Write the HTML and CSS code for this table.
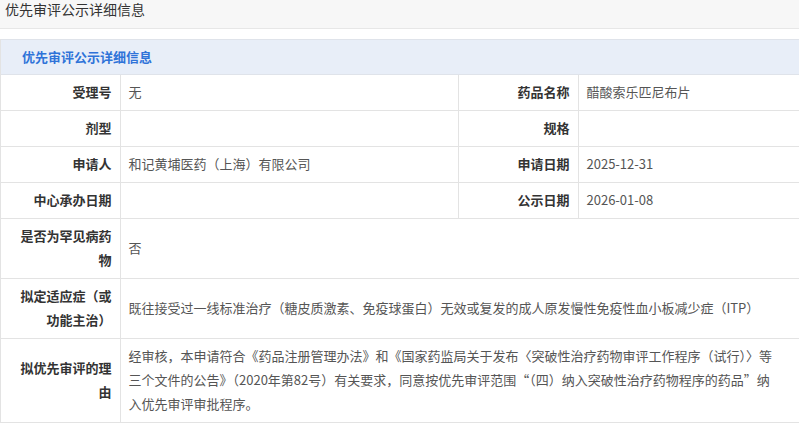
FILE: index.html
```html
<!DOCTYPE html>
<html lang="zh-CN">
<head>
<meta charset="utf-8">
<title>优先审评公示详细信息</title>
<link rel="stylesheet" href="styles.css">
</head>
<body>
<div class="topbar">优先审评公示详细信息</div>
<div class="panel">
  <div class="panel-head">优先审评公示详细信息</div>
  <table class="detail">
    <colgroup>
      <col class="c-label1"><col class="c-value"><col class="c-label"><col class="c-value2">
    </colgroup>
    <tr>
      <th>受理号</th><td>无</td>
      <th>药品名称</th><td>醋酸索乐匹尼布片</td>
    </tr>
    <tr>
      <th>剂型</th><td></td>
      <th>规格</th><td></td>
    </tr>
    <tr>
      <th>申请人</th><td>和记黄埔医药（上海）有限公司</td>
      <th>申请日期</th><td>2025-12-31</td>
    </tr>
    <tr>
      <th>中心承办日期</th><td></td>
      <th>公示日期</th><td>2026-01-08</td>
    </tr>
    <tr>
      <th>是否为罕见病药物</th><td colspan="3">否</td>
    </tr>
    <tr>
      <th>拟定适应症（或功能主治）</th><td colspan="3">既往接受过一线标准治疗（糖皮质激素、免疫球蛋白）无效或复发的成人原发慢性免疫性血小板减少症（ITP）</td>
    </tr>
    <tr>
      <th>拟优先审评的理由</th><td colspan="3" class="long">经审核，本申请符合《药品注册管理办法》和《国家药监局关于发布〈突破性治疗药物审评工作程序（试行）〉等三个文件的公告》（2020年第82号）有关要求，同意按优先审评范围“（四）纳入突破性治疗药物程序的药品”纳入优先审评审批程序。</td>
    </tr>
  </table>
</div>
</body>
</html>
```
FILE: styles.css
```css
html, body {
  margin: 0;
  padding: 0;
  background: #fff;
  overflow: hidden;
}
body {
  font-family: "Microsoft YaHei", "Noto Sans CJK SC", "Noto Sans", sans-serif;
  color: #333;
  width: 799px;
  height: 427px;
}
.topbar {
  height: 28px;
  box-sizing: content-box;
  background: #f7f7f7;
  border-bottom: 1px solid #e7e7e7;
  font-size: 14px;
  line-height: 18px;
  padding-left: 5px;
  color: #333;
}
.panel {
  margin-top: 10px;
  width: 822px;
  border-left: 1px solid #e3e3e3;
}
.panel-head {
  height: 34px;
  line-height: 34px;
  background: #e8eef8;
  border-top: 1px solid #dfe3ea;
  border-bottom: 1px solid #dfe3ea;
  color: #2f73d8;
  font-weight: bold;
  font-size: 13px;
  padding-left: 21px;
}
.detail {
  border-collapse: collapse;
  table-layout: fixed;
  width: 821px;
  font-size: 13px;
  line-height: 24px;
}
.c-label1 { width: 119px; }
.c-label { width: 120px; }
.c-value { width: 338px; }
.c-value2 { width: 244px; }
.detail th,
.detail td {
  border: 1px solid #e3e3e3;
  padding: 5px 8px 6px;
  vertical-align: middle;
}
.detail tr:first-child th,
.detail tr:first-child td {
  border-top: none;
  padding-top: 5px;
}
.detail th {
  text-align: right;
  font-weight: bold;
  color: #333;
  padding-left: 14px;
}
.detail td {
  text-align: left;
  color: #555;
  height: 24px;
}
.detail th:first-child { border-left: none; }
.detail td.long { padding-right: 40px; }
```
